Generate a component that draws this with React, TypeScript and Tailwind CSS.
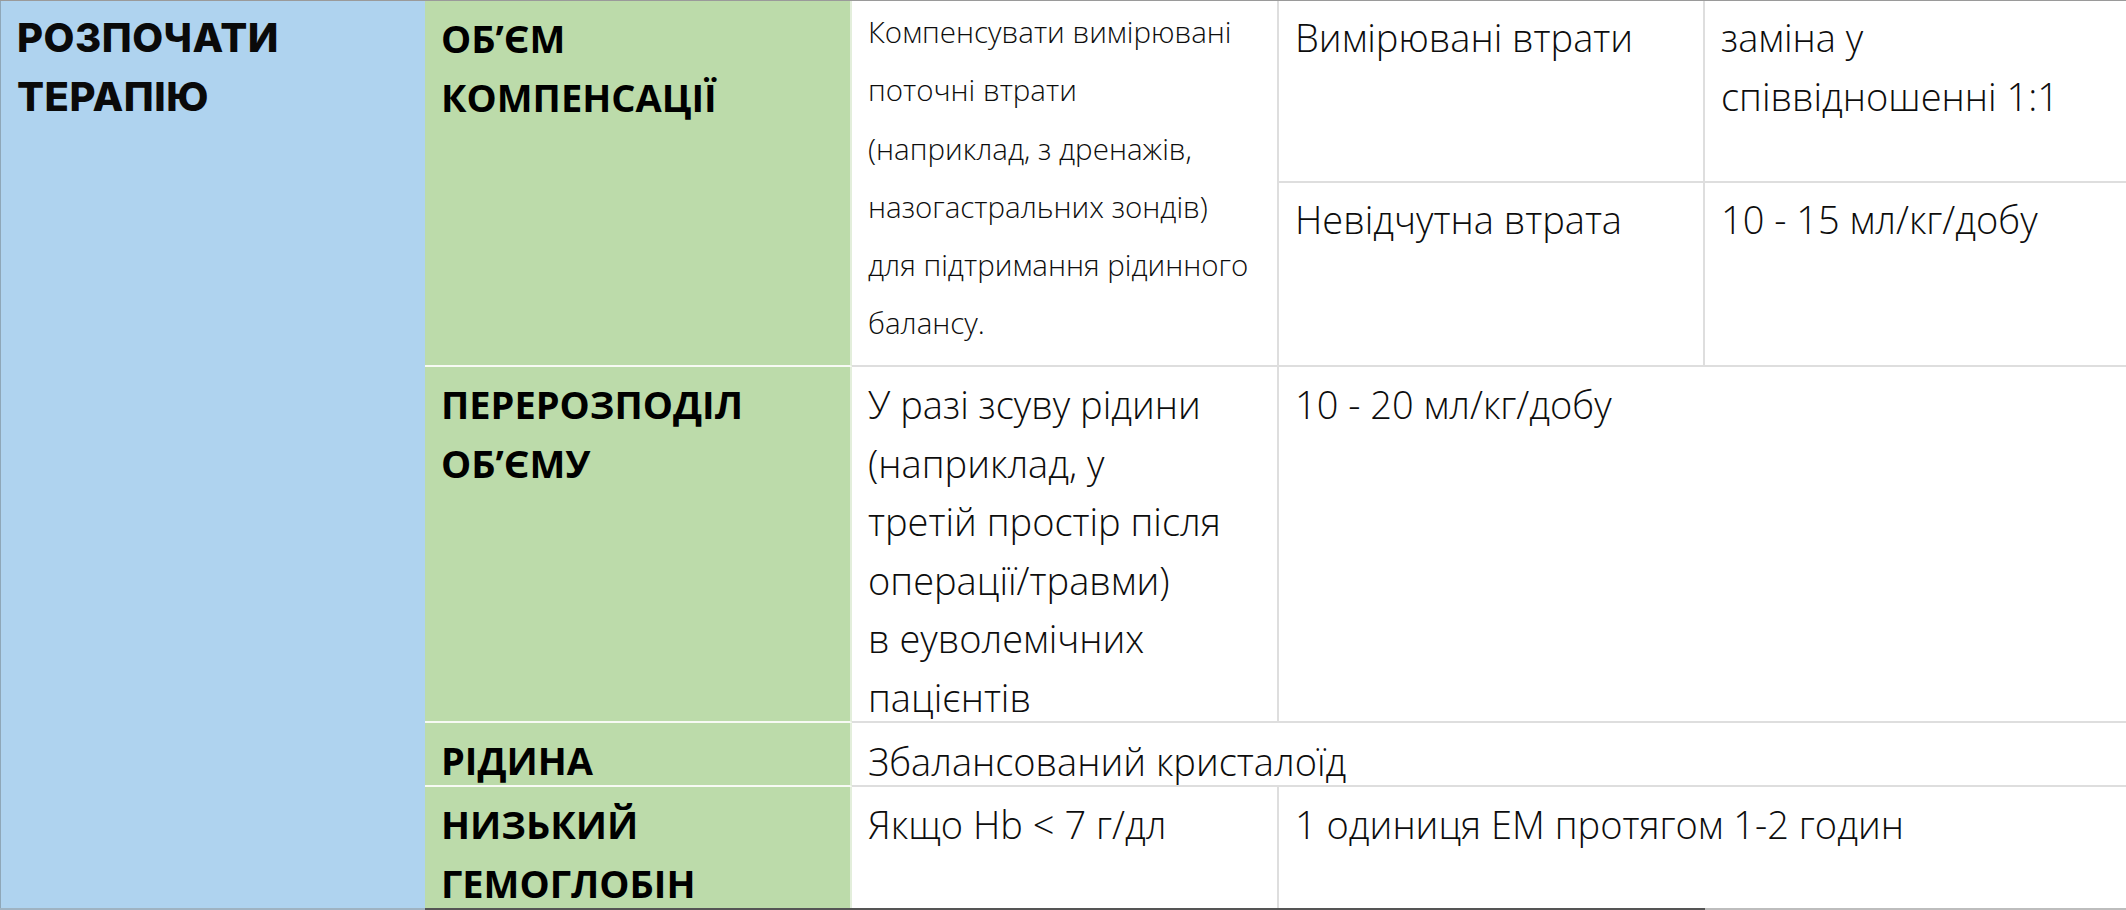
import React from 'react'

const head = "font-['Open_Sans',sans-serif] font-bold text-[38px] leading-[58.5px] text-black"
const big = "font-['Open_Sans',sans-serif] font-light text-[38px] leading-[58.5px] text-[#0d0d0d]"
const small = "font-['Open_Sans',sans-serif] font-light text-[29.5px] leading-[58.3px] text-[#0d0d0d]"

const green = 'bg-[#bcdbaa] border-r-2 border-b-2 border-r-[#e3eedb] border-b-[#f7faf4] pl-4 pt-[8px] overflow-hidden'
const white = 'bg-white border-b-2 border-[#dedede] pl-4 overflow-hidden'

export default function App() {
  return (
    <div className="flex h-[910px] w-full flex-col overflow-hidden bg-white">
      <div className="grid flex-1 grid-cols-[425px_427px_427px_426px_1fr] grid-rows-[182px_184px_356px_64px_1fr] border-t border-t-[#9a9a9a] overflow-hidden">
        {/* left label spans the whole table */}
        <div className="row-span-5 border-l border-l-[#8fa7b8] bg-[#afd3ef] pl-4 pt-[8px]">
          <div className="font-['Inter',sans-serif] text-[40px] font-extrabold leading-[58.5px] tracking-[0.5px] text-[#0a0a0a]">
            РОЗПОЧАТИ
            <br />
            ТЕРАПІЮ
          </div>
        </div>

        {/* об'єм компенсації */}
        <div className={`row-span-2 ${green}`}>
          <div className={head}>
            ОБ’ЄМ
            <br />
            КОМПЕНСАЦІЇ
          </div>
        </div>
        <div className={`row-span-2 border-r-2 pt-[2px] ${white}`}>
          <div className={small}>
            Компенсувати вимірювані
            <br />
            поточні втрати
            <br />
            (наприклад, з дренажів,
            <br />
            назогастральних зондів)
            <br />
            для підтримання рідинного
            <br />
            балансу.
          </div>
        </div>
        <div className={`border-r-2 pt-[7px] ${white}`}>
          <div className={big}>Вимірювані втрати</div>
        </div>
        <div className={`pt-[7px] ${white}`}>
          <div className={big}>
            заміна у
            <br />
            співвідношенні 1:1
          </div>
        </div>
        <div className={`border-r-2 pt-[7px] ${white}`}>
          <div className={big}>Невідчутна втрата</div>
        </div>
        <div className={`pt-[7px] ${white}`}>
          <div className={big}>10 - 15 мл/кг/добу</div>
        </div>

        {/* перерозподіл */}
        <div className={green}>
          <div className={head}>
            ПЕРЕРОЗПОДІЛ
            <br />
            ОБ’ЄМУ
          </div>
        </div>
        <div className={`border-r-2 pt-[8px] ${white}`}>
          <div className={big}>
            У разі зсуву рідини
            <br />
            (наприклад, у
            <br />
            третій простір після
            <br />
            операції/травми)
            <br />
            в еуволемічних
            <br />
            пацієнтів
          </div>
        </div>
        <div className={`col-span-2 pt-[8px] ${white}`}>
          <div className={big}>10 - 20 мл/кг/добу</div>
        </div>

        {/* рідина */}
        <div className={green}>
          <div className={head}>РІДИНА</div>
        </div>
        <div className={`col-span-3 pt-[9px] ${white}`}>
          <div className={big}>Збалансований кристалоїд</div>
        </div>

        {/* низький гемоглобін */}
        <div className="overflow-hidden border-r-2 border-r-[#e3eedb] bg-[#bcdbaa] pl-4 pt-[8px]">
          <div className={head}>
            НИЗЬКИЙ
            <br />
            ГЕМОГЛОБІН
          </div>
        </div>
        <div className="overflow-hidden border-r-2 border-[#dedede] bg-white pl-4 pt-[8px]">
          <div className={big}>Якщо Hb &lt; 7 г/дл</div>
        </div>
        <div className="col-span-2 overflow-hidden bg-white pl-4 pt-[8px]">
          <div className={big}>1 одиниця ЕМ протягом 1-2 годин</div>
        </div>
      </div>
      <div className="flex h-[2px] shrink-0">
        <div className="w-[425px] bg-[#9fb3c2]" />
        <div className="w-[1280px] bg-[#555555]" />
        <div className="flex-1 bg-[#bdbdbd]" />
      </div>
    </div>
  )
}
